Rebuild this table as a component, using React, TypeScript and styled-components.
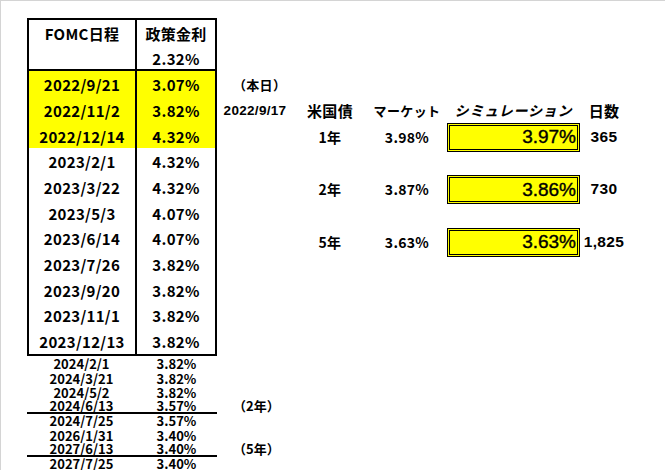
import styled, { createGlobalStyle } from "styled-components";

const GlobalStyle = createGlobalStyle`
  html, body {
    margin: 0;
    padding: 0;
    background: #ffffff;
  }
  body {
    font-family: "Noto Sans CJK JP", "Liberation Sans", sans-serif;
    color: #000000;
  }
`;

const Sheet = styled.div`
  width: 665px;
  height: 470px;
  box-sizing: border-box;
  border-left: 1px solid #d4d4d4;
  border-top: 1px solid #d4d4d4;
  padding: 17px 0 0 26px;
  display: flex;
  align-items: flex-start;
  overflow: hidden;
`;

const LeftCol = styled.div`
  width: 190px;
  flex: none;
  display: flex;
  flex-direction: column;
`;

const Table = styled.div`
  width: 190px;
  box-sizing: border-box;
  border: 2px solid #000;
  display: grid;
  grid-template-columns: 108px 78px;
  grid-auto-rows: 25.7px;
`;

const Cell = styled.div<{ $hl?: boolean; $left?: boolean; $under?: boolean }>`
  box-sizing: border-box;
  display: flex;
  align-items: center;
  justify-content: center;
  font-size: 15px;
  font-weight: 700;
  letter-spacing: 0.3px;
  background: ${({ $hl }) => ($hl ? "#ffff00" : "transparent")};
  border-right: ${({ $left }) => ($left ? "2px solid #000" : "none")};
  border-bottom: ${({ $under }) => ($under ? "2px solid #000" : "none")};
  padding-top: 1px;
`;

const SmallRows = styled.div`
  display: grid;
  grid-template-columns: 109px 81px 0;
  grid-auto-rows: 14.3px;
`;

const SmallCell = styled.div<{ $line?: boolean }>`
  box-sizing: border-box;
  display: flex;
  align-items: flex-end;
  justify-content: center;
  font-size: 13px;
  line-height: 13px;
  font-weight: 700;
  border-bottom: ${({ $line }) => ($line ? "2px solid #000" : "none")};
  margin-bottom: ${({ $line }) => ($line ? "-1px" : "0")};
`;

const Note = styled.div`
  display: flex;
  align-items: flex-end;
  padding-left: 16px;
  font-size: 13px;
  line-height: 14px;
  font-weight: 700;
  white-space: nowrap;
`;

const Right = styled.div`
  margin-top: 53px;
  display: grid;
  grid-template-columns: 76px 74px 80px 133px 48px;
  grid-auto-rows: 26.3px;
`;

const RCell = styled.div<{
  $italic?: boolean;
  $latin?: boolean;
  $size?: number;
  $spacing?: number;
}>`
  display: flex;
  align-items: center;
  justify-content: center;
  white-space: nowrap;
  font-weight: 700;
  font-size: ${({ $size }) => $size ?? 14}px;
  font-style: ${({ $italic }) => ($italic ? "italic" : "normal")};
  font-family: ${({ $latin }) =>
    $latin
      ? `"Liberation Sans", Arial, sans-serif`
      : `"Noto Sans CJK JP", "Liberation Sans", sans-serif`};
  letter-spacing: ${({ $spacing }) => $spacing ?? 0.3}px;
`;

const NoteCell = styled(RCell)`
  justify-content: flex-start;
  padding-left: 16px;
  font-size: 13px;
`;

const SimBox = styled.div`
  box-sizing: border-box;
  height: 29px;
  margin: -1px 0 -2px 0;
  border: 3px double #000;
  background: #ffff00;
  display: flex;
  align-items: center;
  justify-content: flex-end;
  padding-right: 1px;
  font-family: "Liberation Sans", Arial, sans-serif;
  font-size: 19px;
  font-weight: 400;
  -webkit-text-stroke: 0.4px #000;
`;

const mainRows: [string, string, boolean][] = [
  ["2022/9/21", "3.07%", true],
  ["2022/11/2", "3.82%", true],
  ["2022/12/14", "4.32%", true],
  ["2023/2/1", "4.32%", false],
  ["2023/3/22", "4.32%", false],
  ["2023/5/3", "4.07%", false],
  ["2023/6/14", "4.07%", false],
  ["2023/7/26", "3.82%", false],
  ["2023/9/20", "3.82%", false],
  ["2023/11/1", "3.82%", false],
  ["2023/12/13", "3.82%", false],
];

const smallRows: [string, string, boolean, string][] = [
  ["2024/2/1", "3.82%", false, ""],
  ["2024/3/21", "3.82%", false, ""],
  ["2024/5/2", "3.82%", false, ""],
  ["2024/6/13", "3.57%", true, "（2年）"],
  ["2024/7/25", "3.57%", false, ""],
  ["2026/1/31", "3.40%", false, ""],
  ["2027/6/13", "3.40%", true, "（5年）"],
  ["2027/7/25", "3.40%", false, ""],
];

const bonds = [
  { term: "1年", market: "3.98%", sim: "3.97%", days: "365" },
  { term: "2年", market: "3.87%", sim: "3.86%", days: "730" },
  { term: "5年", market: "3.63%", sim: "3.63%", days: "1,825" },
];

export default function App() {
  return (
    <>
      <GlobalStyle />
      <Sheet>
        <LeftCol>
          <Table>
            <Cell $left>FOMC日程</Cell>
            <Cell>政策金利</Cell>
            <Cell $left $under />
            <Cell $under>2.32%</Cell>
            {mainRows.map(([d, r, hl]) => (
              <>
                <Cell key={d} $left $hl={hl}>
                  {d}
                </Cell>
                <Cell key={d + "r"} $hl={hl}>
                  {r}
                </Cell>
              </>
            ))}
          </Table>
          <SmallRows>
            {smallRows.map(([d, r, line, note]) => (
              <>
                <SmallCell key={d} $line={line}>
                  {d}
                </SmallCell>
                <SmallCell key={d + "r"} $line={line}>
                  {r}
                </SmallCell>
                <Note key={d + "n"}>{note}</Note>
              </>
            ))}
          </SmallRows>
        </LeftCol>
        <Right>
          <NoteCell>（本日）</NoteCell>
          <RCell />
          <RCell />
          <RCell />
          <RCell />

          <RCell $latin $size={13.5}>
            2022/9/17
          </RCell>
          <RCell $size={15}>米国債</RCell>
          <RCell $size={13} $spacing={0.4}>
            マーケット
          </RCell>
          <RCell $italic $size={14} $spacing={0.8}>
            シミュレーション
          </RCell>
          <RCell $size={15}>日数</RCell>

          {bonds.map((b, i) => (
            <>
              {i > 0 && (
                <>
                  <RCell />
                  <RCell />
                  <RCell />
                  <RCell />
                  <RCell />
                </>
              )}
              <RCell />
              <RCell $size={14}>{b.term}</RCell>
              <RCell $size={14}>{b.market}</RCell>
              <SimBox>{b.sim}</SimBox>
              <RCell $latin $size={15.5}>
                {b.days}
              </RCell>
            </>
          ))}
        </Right>
      </Sheet>
    </>
  );
}
